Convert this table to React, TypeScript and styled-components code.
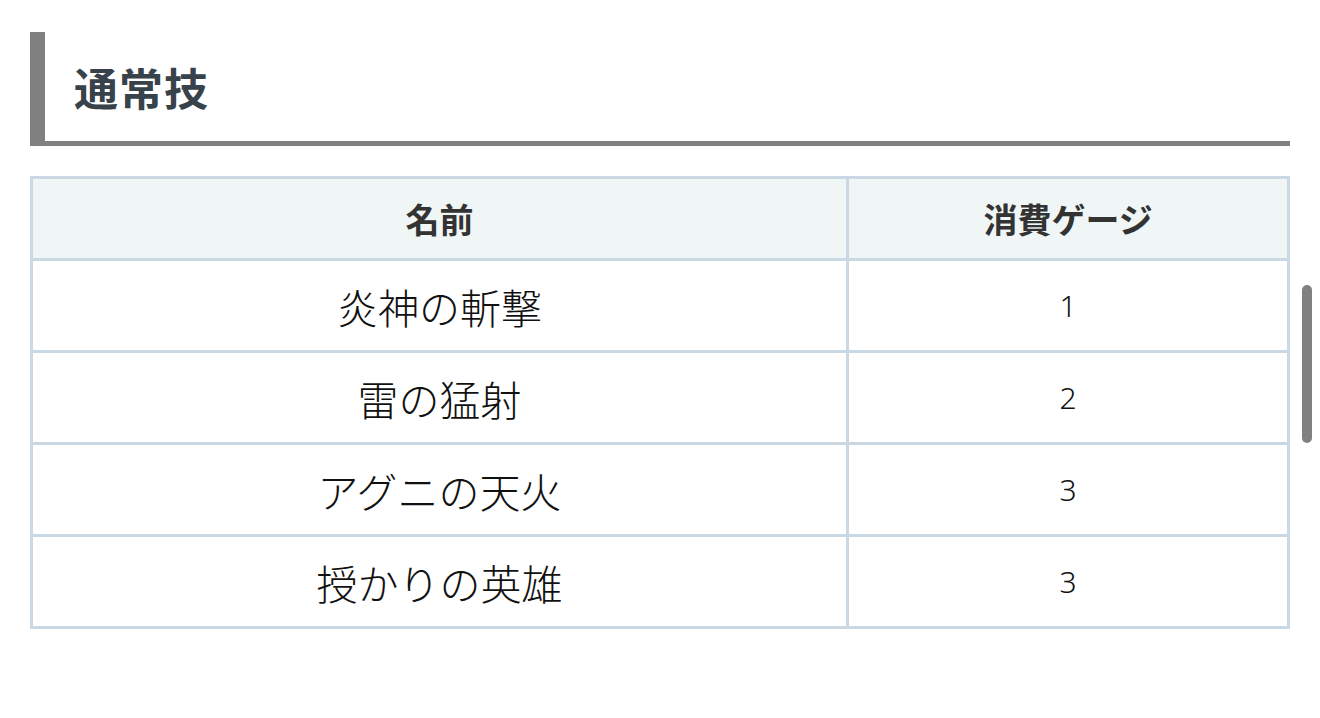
import React from "react";
import styled, { createGlobalStyle } from "styled-components";

const Global = createGlobalStyle`
  html, body { margin: 0; padding: 0; background: #ffffff; }
  body { font-family: "Noto Sans CJK JP", "Noto Sans", sans-serif; overflow: hidden; }
`;

const Page = styled.div`
  position: relative;
  width: 1320px;
  height: 718px;
  box-sizing: border-box;
  padding: 32px 30px 0 30px;
`;

const Heading = styled.h2`
  margin: 0;
  height: 109px;
  display: flex;
  align-items: center;
  padding-left: 29px;
  border-left: 15px solid #808080;
  border-bottom: 5px solid #808080;
  font-size: 44px;
  font-weight: 700;
  color: #38424a;
  letter-spacing: 1px;
`;

const Table = styled.table`
  margin-top: 30px;
  width: 100%;
  border-collapse: collapse;
  border: 3px solid #c9d8e2;
  table-layout: fixed;
`;

const HeadCell = styled.th<{ $w: string }>`
  width: ${(p) => p.$w};
  height: 79px;
  padding: 0;
  background: #f0f5f6;
  border: 3px solid #c9d8e2;
  font-size: 34px;
  font-weight: 700;
  color: #333333;
  text-align: center;
`;

const Cell = styled.td<{ $num?: boolean }>`
  height: 89px;
  padding: 0;
  border: 3px solid #c9d8e2;
  font-size: ${(p) => (p.$num ? "30px" : "41px")};
  font-weight: 300;
  color: #111111;
  text-align: center;
  font-family: ${(p) => (p.$num ? `"Noto Sans", "Noto Sans CJK JP", sans-serif` : `"Noto Sans CJK JP", sans-serif`)};
`;

const ScrollThumb = styled.div`
  position: absolute;
  left: 1302px;
  top: 285px;
  width: 10px;
  height: 158px;
  border-radius: 5px;
  background: #808080;
`;

const rows: [string, string][] = [
  ["炎神の斬撃", "1"],
  ["雷の猛射", "2"],
  ["アグニの天火", "3"],
  ["授かりの英雄", "3"],
];

export default function App() {
  return (
    <Page>
      <Global />
      <Heading>通常技</Heading>
      <Table>
        <thead>
          <tr>
            <HeadCell $w="65%">名前</HeadCell>
            <HeadCell $w="35%">消費ゲージ</HeadCell>
          </tr>
        </thead>
        <tbody>
          {rows.map(([name, cost]) => (
            <tr key={name}>
              <Cell>{name}</Cell>
              <Cell $num>{cost}</Cell>
            </tr>
          ))}
        </tbody>
      </Table>
      <ScrollThumb />
    </Page>
  );
}
